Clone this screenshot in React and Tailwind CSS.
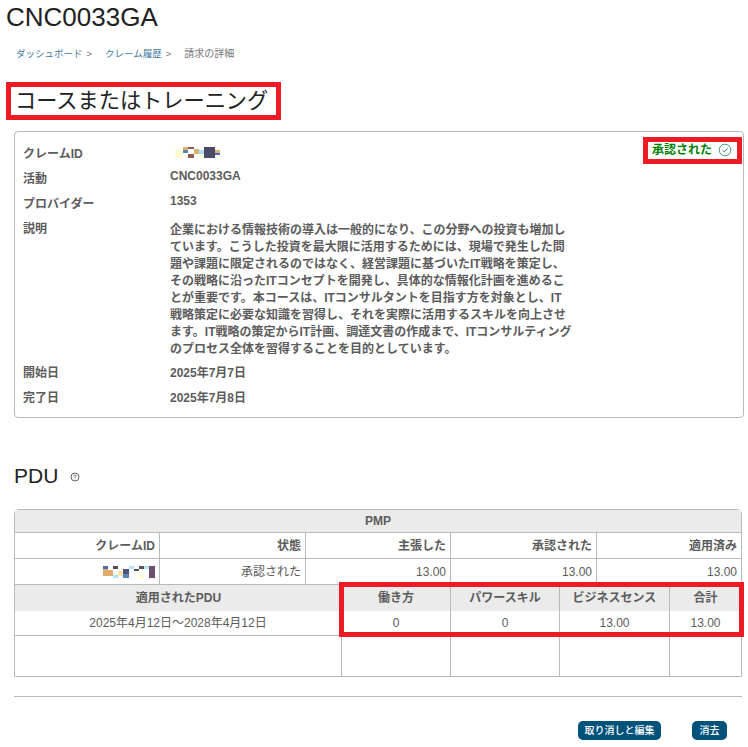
import React from 'react';

const FONT = { fontFamily: '"Liberation Sans", "Noto Sans CJK JP", sans-serif' };

const descLines = [
  '企業における情報技術の導入は一般的になり、この分野への投資も増加し',
  'ています。こうした投資を最大限に活用するためには、現場で発生した問',
  '題や課題に限定されるのではなく、経営課題に基づいたIT戦略を策定し、',
  'その戦略に沿ったITコンセプトを開発し、具体的な情報化計画を進めるこ',
  'とが重要です。本コースは、ITコンサルタントを目指す方を対象とし、IT',
  '戦略策定に必要な知識を習得し、それを実際に活用するスキルを向上させ',
  'ます。IT戦略の策定からIT計画、調達文書の作成まで、ITコンサルティング',
  'のプロセス全体を習得することを目的としています。',
];

// redacted claim id blocks
const Mosaic1 = () => (
  <svg width="50" height="12" className="block">
    <rect x="0" y="1" width="50" height="10" fill="#fff" />
    <rect x="5" y="2" width="8" height="9" fill="#fffbd6" />
    <rect x="13" y="0" width="5" height="3" fill="#e0b070" />
    <rect x="13" y="3" width="5" height="3" fill="#4a8db0" />
    <rect x="18" y="0" width="6" height="2" fill="#8f5a50" />
    <rect x="18" y="7" width="6" height="4" fill="#8f5a50" />
    <rect x="24" y="2" width="5" height="5" fill="#e0b070" />
    <rect x="29" y="3" width="5" height="4" fill="#a8def8" />
    <rect x="29" y="7" width="5" height="4" fill="#fffbd6" />
    <rect x="34" y="0" width="11" height="11" fill="#4b4b68" />
    <rect x="45" y="3" width="5" height="3" fill="#e0b070" />
    <rect x="45" y="6" width="5" height="2" fill="#4a70b0" />
  </svg>
);

const Mosaic2 = () => (
  <svg width="52" height="12" className="block">
    <rect x="0" y="0" width="5" height="3" fill="#4f6ba8" />
    <rect x="0" y="3" width="5" height="7" fill="#e2ac70" />
    <rect x="5" y="4" width="5" height="6" fill="#e2ac70" />
    <rect x="10" y="0" width="5" height="3" fill="#5c4a50" />
    <rect x="10" y="9" width="5" height="3" fill="#b0e4f8" />
    <rect x="15" y="5" width="5" height="5" fill="#fbe6a8" />
    <rect x="20" y="3" width="6" height="5" fill="#55527a" />
    <rect x="20" y="8" width="6" height="4" fill="#5588b8" />
    <rect x="26" y="0" width="5" height="3" fill="#b0e4f8" />
    <rect x="31" y="3" width="5" height="2" fill="#4b4b60" />
    <rect x="36" y="0" width="5" height="3" fill="#555" />
    <rect x="41" y="0" width="5" height="3" fill="#b0e4f8" />
    <rect x="36" y="9" width="5" height="3" fill="#fdfbc8" />
    <rect x="46" y="0" width="6" height="12" fill="#6c5070" />
  </svg>
);

const Cell = ({ children, className = '' }) => (
  <div className={`flex items-center px-[4px] border-r border-[#b9b9c0] last:border-r-0 ${className}`}>{children}</div>
);

const InfoRow = ({ label, children, className = '' }) => (
  <div className={`grid grid-cols-[147px_1fr] font-bold ${className}`}>
    <div>{label}</div>
    <div>{children}</div>
  </div>
);

export default function App() {
  return (
    <div style={FONT} className="w-[748px] h-[747px] overflow-hidden bg-white text-[#5c5c5c] text-[12px] relative">
      <h1 className="pl-[6px] pt-[3px] text-[26px] leading-[28px] text-[#222]">CNC0033GA</h1>

      <nav className="flex pl-[16px] pt-[16px] text-[9.5px] leading-[14px]">
        <span className="text-[#3f7a9c]">ダッシュボード</span>
        <span className="ml-[4px] text-[#777]">&gt;</span>
        <span className="ml-[13px] text-[#3f7a9c]">クレーム履歴</span>
        <span className="ml-[4px] text-[#777]">&gt;</span>
        <span className="ml-[13px] text-[10px] text-[#777]">請求の詳細</span>
      </nav>

      <div className="ml-[6px] mt-[21px] w-[275px] h-[38px] border-[5px] border-[#ed1c24] pl-[4px] text-[21.2px] leading-[28px] text-[#222]">
        コースまたはトレーニング
      </div>

      <section className="relative ml-[14px] mt-[11px] w-[730px] h-[287px] border border-[#b9b9c0] rounded-[4px] pl-[8px] pt-[15px] leading-[15px]">
        <InfoRow label="クレームID" className="h-[25px]"><Mosaic1 /></InfoRow>
        <InfoRow label="活動" className="h-[25px]"><span className="relative -top-[3px]">CNC0033GA</span></InfoRow>
        <InfoRow label="プロバイダー" className="h-[25px]"><span className="relative -top-[3px]">1353</span></InfoRow>
        <InfoRow label="説明" className="h-[144px]">
          {descLines.map((line) => (
            <div key={line} className="whitespace-nowrap leading-[17px]">{line}</div>
          ))}
        </InfoRow>
        <InfoRow label="開始日" className="h-[25px]">2025年7月7日</InfoRow>
        <InfoRow label="完了日" className="h-[25px]">2025年7月8日</InfoRow>

        <div className="absolute top-[5px] right-[1px] w-[99px] h-[27px] border-[5px] border-[#ed1c24] flex items-center pl-[4px] pb-[1px] font-bold text-[#008000]">
          <span>承認された</span>
          <svg width="14" height="14" viewBox="0 0 14 14" fill="none" className="ml-[6px]">
            <circle cx="7" cy="7" r="5.8" stroke="#4f9a8a" strokeWidth="1" />
            <path d="M4.5 7.2l1.8 1.7 3.4-3.6" stroke="#3d7a4a" strokeWidth="1" />
          </svg>
        </div>
      </section>

      <div className="flex items-center ml-[14px] mt-[44px] h-[28px]">
        <h2 className="text-[21px] leading-[28px] text-[#222]">PDU</h2>
        <svg width="10" height="10" viewBox="0 0 10 10" fill="none" className="ml-[12px] mt-[2px]">
          <circle cx="5" cy="5" r="4" stroke="#666" strokeWidth="1" />
          <path d="M3.8 4.1c0-1.5 2.4-1.5 2.4 0 0 .8-1.2.8-1.2 1.6M5 6.6v.8" stroke="#666" strokeWidth="0.9" />
        </svg>
      </div>

      <div className="ml-[14px] mt-[19px] w-[728px] border border-[#b9b9c0] rounded-t-[5px]">
        <div className="h-[23px] bg-[#ebebeb] border-b border-[#b9b9c0] flex items-center justify-center font-bold">PMP</div>
        <div className="grid grid-cols-[145px_146px_145px_146px_1fr] h-[26px] border-b border-[#b9b9c0] text-right font-bold">
          <Cell className="justify-end">クレームID</Cell>
          <Cell className="justify-end">状態</Cell>
          <Cell className="justify-end">主張した</Cell>
          <Cell className="justify-end">承認された</Cell>
          <Cell className="justify-end">適用済み</Cell>
        </div>
        <div className="grid grid-cols-[145px_146px_145px_146px_1fr] h-[26px] border-b border-[#b9b9c0]">
          <Cell className="justify-end"><Mosaic2 /></Cell>
          <Cell className="justify-end">承認された</Cell>
          <Cell className="justify-end">13.00</Cell>
          <Cell className="justify-end">13.00</Cell>
          <Cell className="justify-end">13.00</Cell>
        </div>
        <div className="grid grid-cols-[327px_109px_109px_110px_1fr] h-[26px] bg-[#ebebeb] font-bold text-center">
          <Cell className="justify-center border-r-0">適用されたPDU</Cell>
          <Cell className="justify-center">働き方</Cell>
          <Cell className="justify-center">パワースキル</Cell>
          <Cell className="justify-center">ビジネスセンス</Cell>
          <Cell className="justify-center">合計</Cell>
        </div>
        <div className="grid grid-cols-[327px_109px_109px_110px_1fr] h-[25px] border-b border-[#b9b9c0]">
          <Cell className="justify-center">2025年4月12日～2028年4月12日</Cell>
          <Cell className="justify-center">0</Cell>
          <Cell className="justify-center">0</Cell>
          <Cell className="justify-center">13.00</Cell>
          <Cell className="justify-center">13.00</Cell>
        </div>
        <div className="grid grid-cols-[327px_109px_109px_110px_1fr] h-[40px]">
          <Cell />
          <Cell />
          <Cell />
          <Cell />
          <Cell />
        </div>
      </div>

      <hr className="ml-[14px] mt-[19px] w-[728px] border-t border-[#b9b9c0]" />

      <div className="flex ml-[578px] mt-[24px] gap-[31px] text-[10px] font-medium text-white">
        <button className="w-[83px] h-[19px] rounded-[5px] bg-[#00527a] flex items-center justify-center">取り消しと編集</button>
        <button className="w-[35px] h-[19px] rounded-[5px] bg-[#00527a] flex items-center justify-center">消去</button>
      </div>

      {/* annotation box over the PDU table */}
      <div className="absolute left-[339px] top-[582px] w-[405px] h-[55px] border-[5px] border-[#ed1c24]" />
    </div>
  );
}
